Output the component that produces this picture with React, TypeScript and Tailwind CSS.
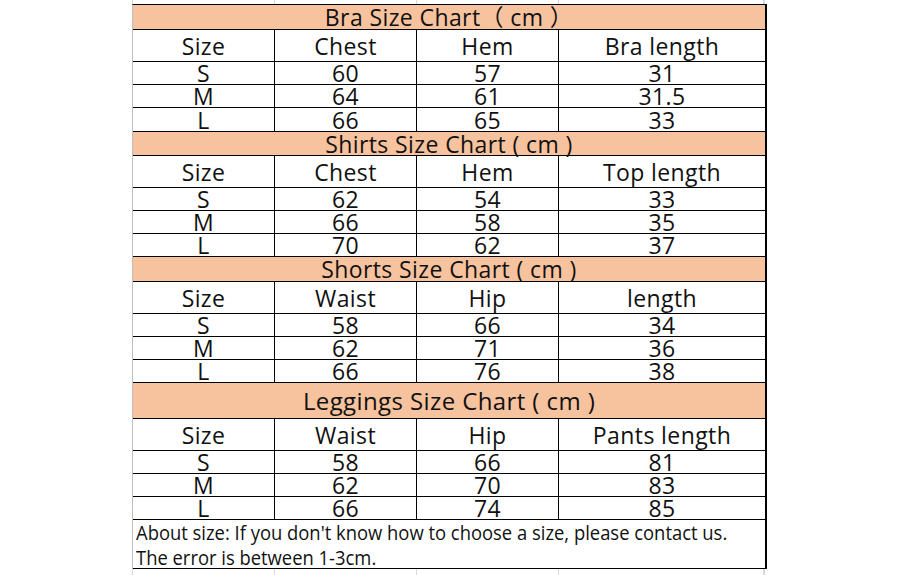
import React from 'react';

type Chart = {
  title: string;
  titleHeight: string;
  titleSize: string;
  headers: string[];
  rows: string[][];
  lastRowHeight: string;
};

const charts: Chart[] = [
  {
    title: 'Bra Size Chart（ cm ）',
    titleHeight: 'h-[25px]',
    titleSize: 'text-[23px]',
    headers: ['Size', 'Chest', 'Hem', 'Bra length'],
    rows: [
      ['S', '60', '57', '31'],
      ['M', '64', '61', '31.5'],
      ['L', '66', '65', '33'],
    ],
    lastRowHeight: 'h-[24px]',
  },
  {
    title: 'Shirts Size Chart ( cm )',
    titleHeight: 'h-[24px]',
    titleSize: 'text-[23px]',
    headers: ['Size', 'Chest', 'Hem', 'Top length'],
    rows: [
      ['S', '62', '54', '33'],
      ['M', '66', '58', '35'],
      ['L', '70', '62', '37'],
    ],
    lastRowHeight: 'h-[23px]',
  },
  {
    title: 'Shorts Size Chart ( cm )',
    titleHeight: 'h-[25px]',
    titleSize: 'text-[23px]',
    headers: ['Size', 'Waist', 'Hip', 'length'],
    rows: [
      ['S', '58', '66', '34'],
      ['M', '62', '71', '36'],
      ['L', '66', '76', '38'],
    ],
    lastRowHeight: 'h-[23px]',
  },
  {
    title: 'Leggings Size Chart ( cm )',
    titleHeight: 'h-[36px]',
    titleSize: 'text-[24px]',
    headers: ['Size', 'Waist', 'Hip', 'Pants length'],
    rows: [
      ['S', '58', '66', '81'],
      ['M', '62', '70', '83'],
      ['L', '66', '74', '85'],
    ],
    lastRowHeight: 'h-[23px]',
  },
];

const cols = 'grid grid-cols-[142px_142px_142px_206px]';

// faint spreadsheet gridlines above and below the table
const Gridlines = ({ height }: { height: string }) => (
  <div className={`${cols} ${height} ml-[132px] w-[635px] border-l border-[#d9d9d9]`}>
    <div className="border-r border-[#d9d9d9]" />
    <div className="border-r border-[#d9d9d9]" />
    <div className="border-r border-[#d9d9d9]" />
    <div className="border-r-2 border-[#d9d9d9]" />
  </div>
);

const Row = ({ cells, height }: { cells: string[]; height: string }) => (
  <div className={`${cols} ${height} border-b border-black`}>
    {cells.map((c, i) => (
      <div
        key={i}
        className={`flex items-center justify-center leading-[18px] ${i < 3 ? 'border-r border-black' : ''}`}
      >
        {c}
      </div>
    ))}
  </div>
);

const ChartBlock = ({ chart }: { chart: Chart }) => (
  <>
    <div
      className={`${chart.titleHeight} ${chart.titleSize} flex items-center justify-center bg-[#f7c39f] border-b border-black leading-[18px]`}
    >
      {chart.title}
    </div>
    <Row cells={chart.headers} height="h-[32px]" />
    <Row cells={chart.rows[0]} height="h-[23px]" />
    <Row cells={chart.rows[1]} height="h-[23px]" />
    <Row cells={chart.rows[2]} height={chart.lastRowHeight} />
  </>
);

export default function App() {
  return (
    <div className="w-[897px] h-[575px] bg-white overflow-hidden font-['Open_Sans','Noto_Sans_CJK_SC',sans-serif] text-[#111]">
      <Gridlines height="h-[4px]" />
      <div className="ml-[132px] w-[635px] border-l border-[#bdbdbd] border-r-2 border-r-black border-t border-t-black text-[23px] tracking-[0.4px]">
        {charts.map((c) => (
          <ChartBlock key={c.title} chart={c} />
        ))}
        <div className="h-[49px] border-b border-black pl-[3px] text-[20px] leading-[25px] tracking-normal whitespace-nowrap">
          <div className="origin-left scale-x-[0.92]">
            About size: If you don't know how to choose a size, please contact us.
          </div>
          <div className="origin-left scale-x-[0.92]">The error is between 1-3cm.</div>
        </div>
      </div>
      <Gridlines height="h-[7px]" />
    </div>
  );
}
